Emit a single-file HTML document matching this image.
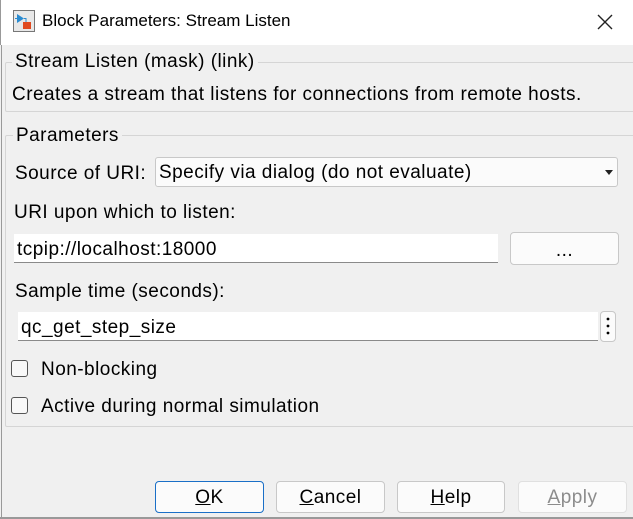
<!DOCTYPE html>
<html><head><style>
*{box-sizing:border-box;margin:0;padding:0}
body{width:633px;height:519px;overflow:hidden;background:#f0f0f0;font-family:"Liberation Sans",sans-serif;font-size:19px;letter-spacing:0.47px;color:#000;position:relative}
.a{position:absolute;white-space:nowrap}
.title{left:0;top:0;width:633px;height:45px;background:#fff;border-left:1px solid #999}
.grp{position:absolute;border:1px solid #d5d5d5;border-radius:2px}
.btn{position:absolute;height:32px;border:1px solid #c8c8c8;border-radius:4px;background:#fbfbfb;text-align:center;line-height:32px}
.inp{position:absolute;background:#fff;border-bottom:1px solid #8a8a8a}
.cb{position:absolute;width:17px;height:17px;border:1px solid #555;border-radius:3px;background:#f8f8f8}
</style></head><body>
<div class="a title"></div>
<svg class="a" style="left:13px;top:10px" width="22" height="22" viewBox="0 0 22 22"><rect x="0.5" y="0.5" width="21" height="21" fill="#e8e8e8" stroke="#777"/><path d="M4 4 L4 13 L11 8.5 Z" fill="#2a8bd0"/><path d="M2 8.5 H4 M11 8.5 H13 V12" stroke="#2a8bd0" fill="none"/><rect x="10" y="12" width="8" height="7" fill="#e04a20"/></svg>
<div class="a" style="left:42px;top:11px;font-size:17px;letter-spacing:0">Block Parameters: Stream Listen</div>
<svg class="a" style="left:597px;top:14px" width="16" height="16"><path d="M1 1L15 15M15 1L1 15" stroke="#222" stroke-width="1.4"/></svg>
<div style="position:absolute;left:1px;top:45px;width:1px;height:474px;background:#999"></div>
<div class="grp" style="left:5px;top:62px;width:640px;height:50px"></div>
<div class="a" style="left:12px;top:51px;background:#f0f0f0;padding:0 3px">Stream Listen (mask) (link)</div>
<div class="a" style="left:12px;top:84px">Creates a stream that listens for connections from remote hosts.</div>
<div class="grp" style="left:5px;top:135px;width:640px;height:292px"></div>
<div class="a" style="left:13px;top:125px;background:#f0f0f0;padding:0 3px">Parameters</div>
<div class="a" style="left:15px;top:163px">Source of URI:</div>
<div class="btn" style="left:155px;top:157px;width:463px;height:30px;text-align:left;padding-left:3px;line-height:30px;border-radius:3px">Specify via dialog (do not evaluate)</div>
<svg class="a" style="left:605px;top:170px" width="8" height="5"><path d="M0 0H8L4 5Z" fill="#222"/></svg>
<div class="a" style="left:14px;top:202px">URI upon which to listen:</div>
<div class="inp" style="left:14px;top:234px;width:484px;height:29px"></div>
<div class="a" style="left:17px;top:239px">tcpip://localhost:18000</div>
<div class="btn" style="left:510px;top:232px;width:109px;height:33px;line-height:35px">...</div>
<div class="a" style="left:15px;top:281px">Sample time (seconds):</div>
<div class="inp" style="left:18px;top:312px;width:580px;height:29px"></div>
<div class="a" style="left:21px;top:317px">qc_get_step_size</div>
<div class="btn" style="left:600px;top:311px;width:16px;height:31px"></div>
<svg class="a" style="left:606px;top:317px" width="4" height="18"><circle cx="2" cy="2" r="1.4"/><circle cx="2" cy="9" r="1.4"/><circle cx="2" cy="16" r="1.4"/></svg>
<div class="cb" style="left:11px;top:360px"></div>
<div class="a" style="left:41px;top:359px">Non-blocking</div>
<div class="cb" style="left:11px;top:397px"></div>
<div class="a" style="left:41px;top:396px">Active during normal simulation</div>
<div class="btn" style="left:155px;top:481px;width:109px;border-color:#1a6fc7"><u>O</u>K</div>
<div class="btn" style="left:276px;top:481px;width:109px"><u>C</u>ancel</div>
<div class="btn" style="left:397px;top:481px;width:108px"><u>H</u>elp</div>
<div class="btn" style="left:518px;top:481px;width:109px;color:#8c8c8c;border-color:#e0e0e0"><u>A</u>pply</div>
<div style="position:absolute;left:0;top:517px;width:633px;height:2px;background:#999"></div>
</body></html>
